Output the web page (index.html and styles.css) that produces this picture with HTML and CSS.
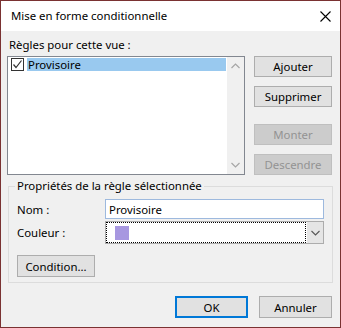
FILE: index.html
```html
<!DOCTYPE html>
<html>
  <head>
    <meta charset="utf-8" />
    <meta name="viewport" content="width=device-width, initial-scale=1" />
    <title>Mise en forme conditionnelle</title>
    <link rel="stylesheet" href="styles.css">
  </head>
  <body>
    <div class="window">
      <div class="titlebar">
        <span class="title">Mise en forme conditionnelle</span>
        <span class="close">
          <svg width="11" height="11" viewBox="0 0 11 11"><path d="M0.5 0.5 L10.5 10.5 M10.5 0.5 L0.5 10.5" stroke="#000" stroke-width="1.1" fill="none"/></svg>
        </span>
      </div>
      <div class="content">
        <div class="rules-label">Règles pour cette vue :</div>
        <div class="rules">
          <div class="listbox">
            <div class="items">
              <div class="item">
                <span class="checkbox">
                  <svg width="11" height="11" viewBox="0 0 11 11"><path d="M1.5 5.5 L4 8.5 L9.5 1.5" stroke="#333" stroke-width="1.2" fill="none"/></svg>
                </span>
                <span class="item-text">Provisoire</span>
              </div>
            </div>
            <div class="scrollbar">
              <svg width="9" height="6" viewBox="0 0 9 6"><path d="M0.5 5 L4.5 1 L8.5 5" stroke="#a6a6a6" stroke-width="1.2" fill="none"/></svg>
              <svg width="9" height="6" viewBox="0 0 9 6"><path d="M0.5 1 L4.5 5 L8.5 1" stroke="#a6a6a6" stroke-width="1.2" fill="none"/></svg>
            </div>
          </div>
          <div class="side-buttons">
            <button class="btn">Ajouter</button>
            <button class="btn">Supprimer</button>
            <button class="btn disabled gap">Monter</button>
            <button class="btn disabled">Descendre</button>
          </div>
        </div>
        <fieldset class="props">
          <legend>Propriétés de la règle sélectionnée</legend>
          <div class="field">
            <label for="nom">Nom :</label>
            <input type="text" id="nom" value="Provisoire">
          </div>
          <div class="field">
            <label>Couleur :</label>
            <div class="combo">
              <div class="combo-value"><span class="swatch"></span></div>
              <div class="combo-arrow">
                <svg width="9" height="6" viewBox="0 0 9 6"><path d="M0.5 1 L4.5 5 L8.5 1" stroke="#555" stroke-width="1.1" fill="none"/></svg>
              </div>
            </div>
          </div>
          <button class="btn condition">Condition...</button>
        </fieldset>
        <div class="footer">
          <button class="btn default">OK</button>
          <button class="btn">Annuler</button>
        </div>
      </div>
    </div>
  </body>
</html>
```

FILE: styles.css
```css
body {
  margin: 0;
  font-family: "Noto Sans", "Liberation Sans", Arial, sans-serif;
  font-size: 11.4px;
  color: #000;
}
.window {
  box-sizing: border-box;
  width: 341px;
  height: 328px;
  border: 1px solid #7a3232;
  display: flex;
  flex-direction: column;
  background-color: #f0f0f0;
}
.titlebar {
  height: 30px;
  background-color: #fff;
  display: flex;
  align-items: center;
  justify-content: space-between;
  padding: 0 9px 0 10px;
  line-height: 16px;
}
.close {
  display: flex;
  margin-top: 1px;
}
.content {
  flex: 1;
  padding: 0 7px 0 6px;
}
.rules-label {
  margin-top: 6px;
  line-height: 16px;
  padding-left: 2px;
}
.rules {
  display: flex;
  margin-top: 3px;
}
.listbox {
  box-sizing: border-box;
  width: 238px;
  height: 119px;
  border: 1px solid #828790;
  background-color: #fff;
  display: flex;
}
.items {
  flex: 1;
  padding: 0 1px 0 3px;
}
.item {
  display: flex;
  align-items: center;
  height: 14px;
}
.checkbox {
  box-sizing: border-box;
  width: 13px;
  height: 13px;
  border: 1px solid #333;
  background-color: #fff;
  display: flex;
  align-items: center;
  justify-content: center;
}
.item-text {
  flex: 1;
  margin-left: 3px;
  background-color: #99c9ef;
  line-height: 13px;
  height: 13px;
  padding-left: 1px;
}
.scrollbar {
  width: 17px;
  background-color: #f0f0f0;
  display: flex;
  flex-direction: column;
  align-items: center;
  justify-content: space-between;
  padding: 6px 0;
}
.side-buttons {
  display: flex;
  flex-direction: column;
  gap: 9px;
  margin-left: 9px;
}
.btn {
  box-sizing: border-box;
  width: 78px;
  height: 21px;
  padding: 0;
  font-family: inherit;
  font-size: 11.4px;
  color: #000;
  background-color: #e1e1e1;
  border: 1px solid #adadad;
}
.btn.gap {
  margin-top: 8px;
}
.btn.disabled {
  background-color: #cccccc;
  border-color: #bfbfbf;
  color: #939393;
}
.props {
  margin: 3px 0 0 1px;
  width: 325px;
  box-sizing: border-box;
  border: 1px solid #dcdcdc;
  padding: 5px 8px 5px 8px;
}
.props legend {
  padding: 0 2px;
  margin-left: -2px;
  line-height: 16px;
}
.field {
  display: flex;
  align-items: center;
  margin-bottom: 2px;
}
.field label {
  width: 88px;
}
.field input {
  box-sizing: border-box;
  width: 219px;
  height: 20px;
  margin: 0;
  padding: 0 3px;
  border: 1px solid #9db9de;
  font-family: inherit;
  font-size: 11.4px;
  color: #000;
  outline: none;
}
.combo {
  box-sizing: border-box;
  width: 219px;
  height: 23px;
  border: 1px solid #acacac;
  background-color: #fff;
  display: flex;
}
.combo-value {
  flex: 1;
  margin: 0 1px 0 0;
  border: 1px dotted #000;
  display: flex;
  align-items: center;
}
.swatch {
  width: 14px;
  height: 14px;
  margin-left: 8px;
  background-color: #a797e0;
}
.combo-arrow {
  width: 16px;
  background-color: #e5e5e5;
  display: flex;
  align-items: center;
  justify-content: center;
}
.condition {
  margin-top: 9px;
  height: 22px;
}
.footer {
  display: flex;
  justify-content: flex-end;
  gap: 11px;
  margin-top: 13px;
  padding-right: 1px;
}
.footer .btn {
  width: 73px;
  height: 22px;
}
.btn.default {
  border: 2px solid #0078d7;
}
```
